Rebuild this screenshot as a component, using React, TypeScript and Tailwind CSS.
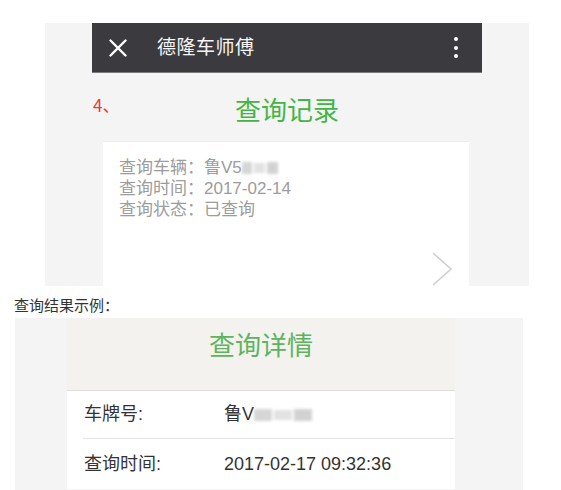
import React from 'react';

const font = { fontFamily: '"Liberation Sans", "Noto Sans CJK SC", sans-serif' };

function Plate({ w }: { w: number }) {
  // blurred number plate
  return (
    <span className="inline-flex items-center gap-[2px] blur-[1.5px]" style={{ width: w }}>
      <span className="h-[12px] flex-1 bg-[#d6d6d6]" />
      <span className="h-[10px] flex-1 bg-[#e2e2e2]" />
      <span className="h-[12px] flex-1 bg-[#d2d2d2]" />
    </span>
  );
}

function PhoneBar() {
  return (
    <div className="mx-[47px] flex h-[50px] items-center border-b border-[#7a7a7c] bg-[#3b3b3f] text-[#f7f7f7]">
      <svg width="18" height="18" viewBox="0 0 18 18" className="ml-[17px]">
        <path d="M1.5 1.5 L16.5 16.5 M16.5 1.5 L1.5 16.5" stroke="#fff" strokeWidth="2.4" strokeLinecap="round" />
      </svg>
      <span className="ml-[30px] text-[19px] leading-none tracking-[0.5px]">德隆车师傅</span>
      <div className="ml-auto mr-[24px] flex flex-col gap-[4.5px]">
        <span className="h-[4px] w-[4px] rounded-full bg-white" />
        <span className="h-[4px] w-[4px] rounded-full bg-white" />
        <span className="h-[4px] w-[4px] rounded-full bg-white" />
      </div>
    </div>
  );
}

export default function App() {
  return (
    <div className="min-h-[490px] w-[561px] overflow-hidden bg-white pt-[23px]" style={font}>
      {/* step 4 screenshot */}
      <div className="ml-[45px] h-[263px] w-[484px] overflow-hidden bg-[#f4f4f5]">
        <PhoneBar />
        <div className="relative mx-[47px] pb-[17px] pt-[25px] text-center">
          <span
            className="absolute left-[1px] top-[23px] text-[17px] leading-none text-[#e53b35]"
            style={{ fontFamily: '"Noto Sans CJK SC", sans-serif' }}
          >
            4、
          </span>
          <h1 className="text-[26px] font-normal leading-[26px] text-[#44b447]">查询记录</h1>
        </div>
        <div className="ml-[58px] h-[160px] w-[366px] border-t border-[#ececec] bg-white pl-[16px] pt-[15px]">
          <div className="text-[17px] leading-[21px] text-[#9c9c9c]">
            <div className="flex items-center">
              查询车辆：鲁V5
              <Plate w={36} />
            </div>
            <div>查询时间：2017-02-14</div>
            <div>查询状态：已查询</div>
          </div>
          <div className="mt-[32px] flex justify-end pr-[16px]">
            <svg width="21" height="34" viewBox="0 0 21 34">
              <path d="M1 1 L19 17 L1 33" fill="none" stroke="#cfcfd2" strokeWidth="1.6" />
            </svg>
          </div>
        </div>
      </div>

      <p
        className="ml-[14px] mt-[9px] text-[15px] leading-[20px] text-[#333]"
        style={{ fontFamily: '"Noto Sans CJK SC", sans-serif' }}
      >
        查询结果示例：
      </p>

      {/* result screenshot */}
      <div className="ml-[15px] mt-[3px] h-[172px] w-[508px] bg-[#f4f4f5]">
        <div className="ml-[52px] w-[388px]">
          <div className="h-[72px] bg-[#f3f2ee] pt-[15px] text-center">
            <h2 className="text-[26px] font-normal leading-[26px] text-[#5fb35f]">查询详情</h2>
          </div>
          <div className="border-t border-[#dedede] bg-white text-[18px] text-[#333]">
            <div className="ml-[16px] flex h-[48px] items-center border-b border-[#e3e3e3]">
              <span className="w-[141px] pl-[1px]">车牌号:</span>
              <span className="flex items-center">
                鲁V
                <Plate w={58} />
              </span>
            </div>
            <div className="ml-[16px] flex h-[50px] items-center">
              <span className="w-[141px] pl-[1px]">查询时间:</span>
              <span>2017-02-17 09:32:36</span>
            </div>
          </div>
        </div>
      </div>
    </div>
  );
}
